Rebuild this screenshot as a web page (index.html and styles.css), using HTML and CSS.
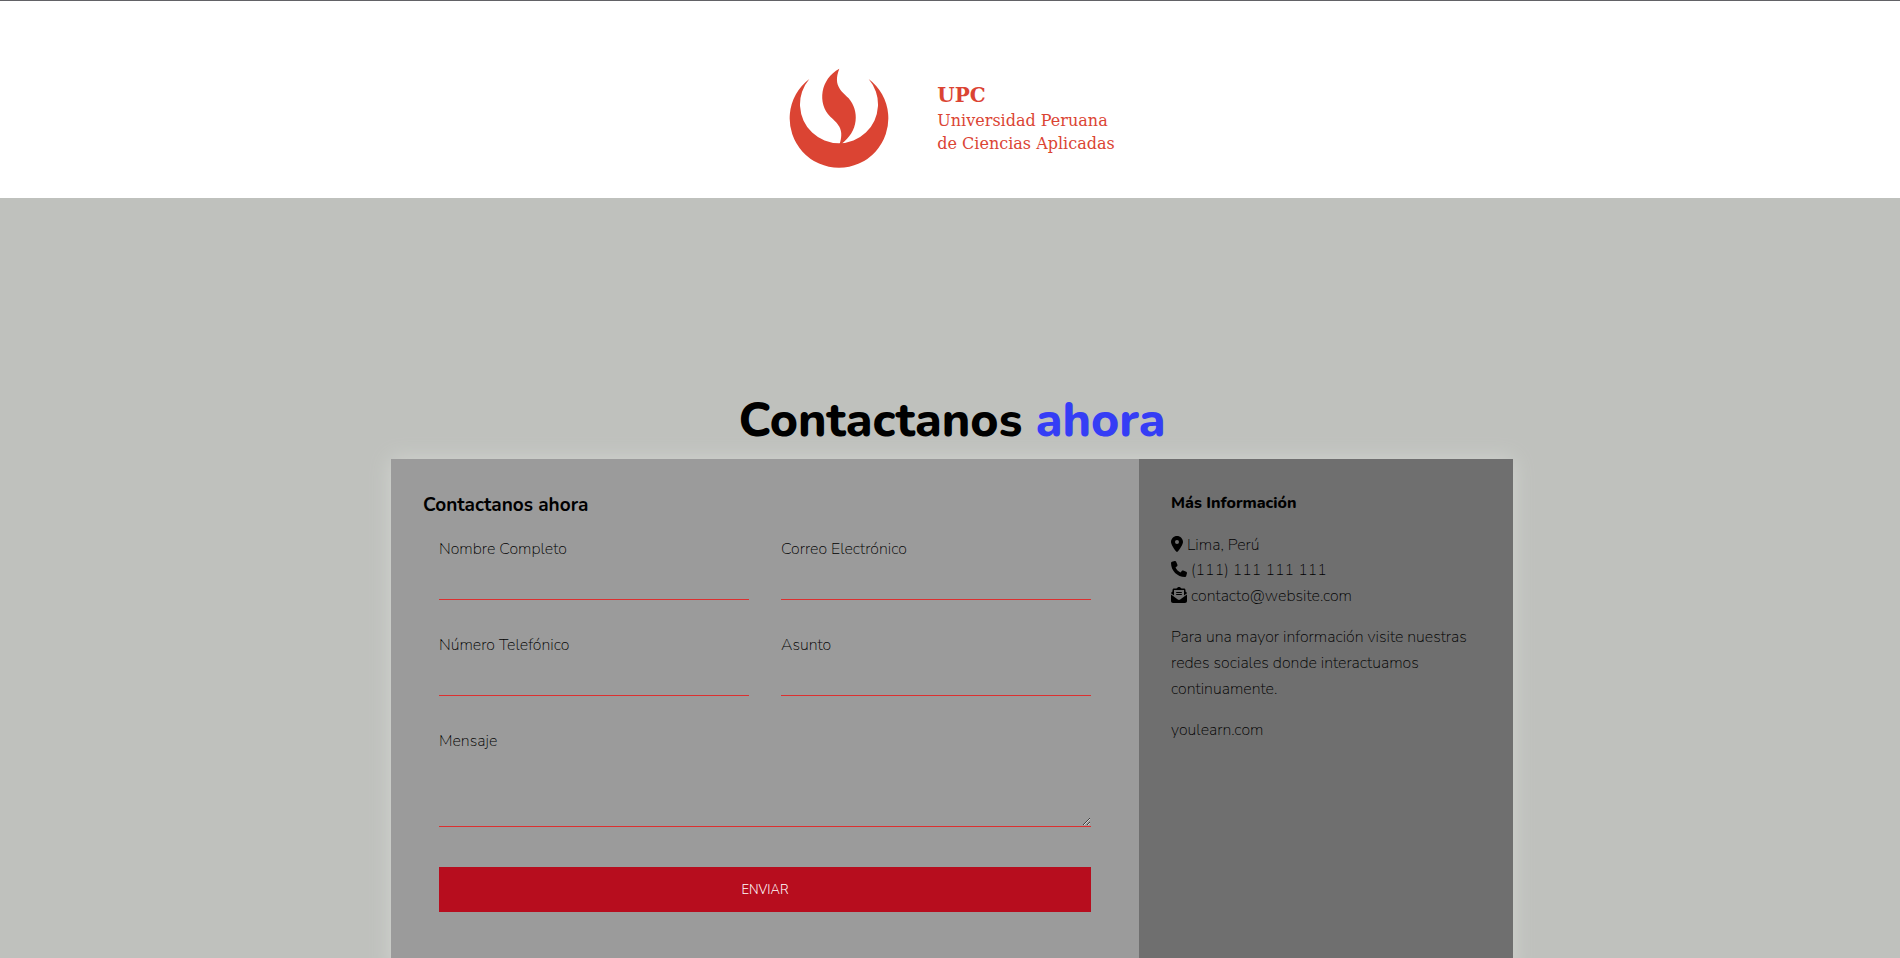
FILE: index.html
```html
<!DOCTYPE html>
<html lang="es">
<head>
  <meta charset="utf-8">
  <meta name="viewport" content="width=device-width, initial-scale=1">
  <title>Contactanos ahora</title>
  <link rel="stylesheet" href="styles.css">
</head>
<body>
  <header class="site-header">
    <svg class="brand-mark" viewBox="28 26 300 300" aria-hidden="true">
      <path d="M89 59A148 148 0 1 0 267 59A117 117 0 1 1 89 59Z"/>
      <path d="M179 28C122 58 112 132 152 172C180 197 193 212 180 255L185 254C238 216 239 154 207 117C192 99 157 82 179 28Z"/>
    </svg>
    <div class="brand-text">
      <strong class="brand-short">UPC</strong>
      <span>Universidad Peruana</span>
      <span>de Ciencias Aplicadas</span>
    </div>
  </header>
  <main class="content">
    <h1 class="title">Contactanos <span class="title-accent">ahora</span></h1>
    <div class="contact-wrapper">
      <section class="contact-form">
        <h3 class="form-title">Contactanos ahora</h3>
        <form class="form-grid">
          <div class="field">
            <label for="fullname">Nombre Completo</label>
            <input type="text" id="fullname" name="fullname">
          </div>
          <div class="field">
            <label for="email">Correo Electrónico</label>
            <input type="email" id="email" name="email">
          </div>
          <div class="field">
            <label for="phone">Número Telefónico</label>
            <input type="tel" id="phone" name="phone">
          </div>
          <div class="field">
            <label for="subject">Asunto</label>
            <input type="text" id="subject" name="subject">
          </div>
          <div class="field field-wide">
            <label for="message">Mensaje</label>
            <textarea id="message" name="message" rows="3"></textarea>
          </div>
          <button class="send" type="submit">ENVIAR</button>
        </form>
      </section>
      <section class="contact-info">
        <h4 class="info-title">Más Información</h4>
        <ul class="info-list">
          <li>
            <svg class="icon icon-pin" viewBox="0 0 384 512" aria-hidden="true"><path d="M215.700 499.200C267 435 384 279.400 384 192C384 86 298 0 192 0S0 86 0 192c0 87.400 117 243 168.300 307.200c12.300 15.300 35.100 15.300 47.400 0zM192 128a64 64 0 1 1 0 128 64 64 0 1 1 0-128z"/></svg>
            Lima, Perú
          </li>
          <li>
            <svg class="icon" viewBox="0 0 512 512" aria-hidden="true"><path d="M164.900 24.600c-7.700-18.600-28-28.500-47.400-23.200l-88 24C12.100 30.200 0 46 0 64C0 311.400 200.600 512 448 512c18 0 33.800-12.100 38.600-29.500l24-88c5.300-19.400-4.600-39.700-23.200-47.400l-96-40c-16.300-6.800-35.200-2.100-46.300 11.600L304.700 368C234.300 334.700 177.300 277.700 144 207.300L193.300 167c13.700-11.200 18.400-30 11.600-46.300l-40-96z"/></svg>
            (111) 111 111 111
          </li>
          <li>
            <svg class="icon" viewBox="0 0 512 512" aria-hidden="true"><path d="M215.400 96H96v177.400L.2 202.500c1.600-18.100 10.900-34.900 25.700-45.800L48 140.300V96c0-26.500 21.500-48 48-48h76.600l49.900-36.900C232.200 3.900 243.900 0 256 0s23.800 3.900 33.500 11L339.400 48H416c26.500 0 48 21.500 48 48v44.300l22.100 16.400c14.800 10.900 24.100 27.700 25.700 45.800L416 273.400V96H215.400zM0 448V242.100L217.600 403.300c11.100 8.200 24.600 12.700 38.400 12.700s27.300-4.400 38.400-12.700L512 242.100V448c0 35.300-28.700 64-64 64H64c-35.300 0-64-28.700-64-64zM176 160H336c8.800 0 16 7.200 16 16s-7.200 16-16 16H176c-8.800 0-16-7.200-16-16s7.200-16 16-16zm0 64H336c8.800 0 16 7.200 16 16s-7.200 16-16 16H176c-8.800 0-16-7.200-16-16s7.200-16 16-16z"/></svg>
            contacto@website.com
          </li>
        </ul>
        <p>Para una mayor información visite nuestras redes sociales donde interactuamos continuamente.</p>
        <p>youlearn.com</p>
      </section>
    </div>
  </main>
</body>
</html>
```
FILE: styles.css
```css
* {
  box-sizing: border-box;
}

body {
  margin: 0;
  background: #bfc1bd;
  color: #000;
  font-family: Nunito, "Open Sans", "Noto Sans", sans-serif;
  font-size: 16px;
  font-weight: 200;
  line-height: 1.6;
}

.site-header {
  display: flex;
  justify-content: center;
  align-items: center;
  gap: 48px;
  padding: 67px 0 30px 4px;
  border-top: 1px solid #626266;
  background: #fff;
}

.brand-mark {
  width: 100px;
  height: 100px;
  fill: #db4433;
}

.brand-text {
  display: flex;
  flex-direction: column;
  color: #db4433;
  font-family: "DejaVu Serif", serif;
  font-size: 16px;
  font-weight: 400;
  line-height: 23px;
}

.brand-short {
  font-size: 20px;
  line-height: 28px;
}

.content {
  width: 100%;
  max-width: 1126px;
  margin: 0 auto;
  padding: 191px 0 48px 4px;
}

.title {
  margin: 0;
  padding-bottom: 7px;
  font-size: 48px;
  font-weight: 800;
  line-height: 63px;
  text-align: center;
}

.title-accent {
  color: #353df5;
}

.contact-wrapper {
  display: grid;
  grid-template-columns: 2fr 1fr;
  box-shadow: 0 0 20px #d2d4d0;
}

.contact-form {
  padding: 32px 32px 45px;
  background: #9b9b9b;
}

.contact-info {
  padding: 32px;
  background: #6f6f6f;
}

.form-title {
  margin: 0;
  font-size: 19px;
  font-weight: 700;
  line-height: 28px;
}

.form-grid {
  display: grid;
  grid-template-columns: 1fr 1fr;
  gap: 31px 32px;
  padding: 16px;
}

.field label {
  display: block;
  line-height: 28px;
}

.field input,
.field textarea {
  display: block;
  width: 100%;
  padding: 8px;
  border: 0;
  border-bottom: 1px solid #dc3030;
  background: none;
  color: inherit;
  font: inherit;
}

.field input {
  height: 37px;
}

.field textarea {
  height: 72px;
  resize: vertical;
}

.field-wide,
.send {
  grid-column: 1 / -1;
}

.send {
  height: 45px;
  margin-top: 9px;
  padding: 2px 0 0;
  border: 0;
  background: #b70d1e;
  color: #fff;
  font: inherit;
  font-size: 13px;
  font-weight: 300;
}

.info-title {
  margin: 0 0 16px;
  font-size: 16px;
  font-weight: 800;
}

.info-list {
  margin: 0 0 16px;
  padding: 0;
  list-style: none;
}

.icon {
  width: 16px;
  height: 16px;
  vertical-align: -2px;
}

.icon-pin {
  width: 12px;
}

.contact-info p {
  margin: 0 0 16px;
}
```
